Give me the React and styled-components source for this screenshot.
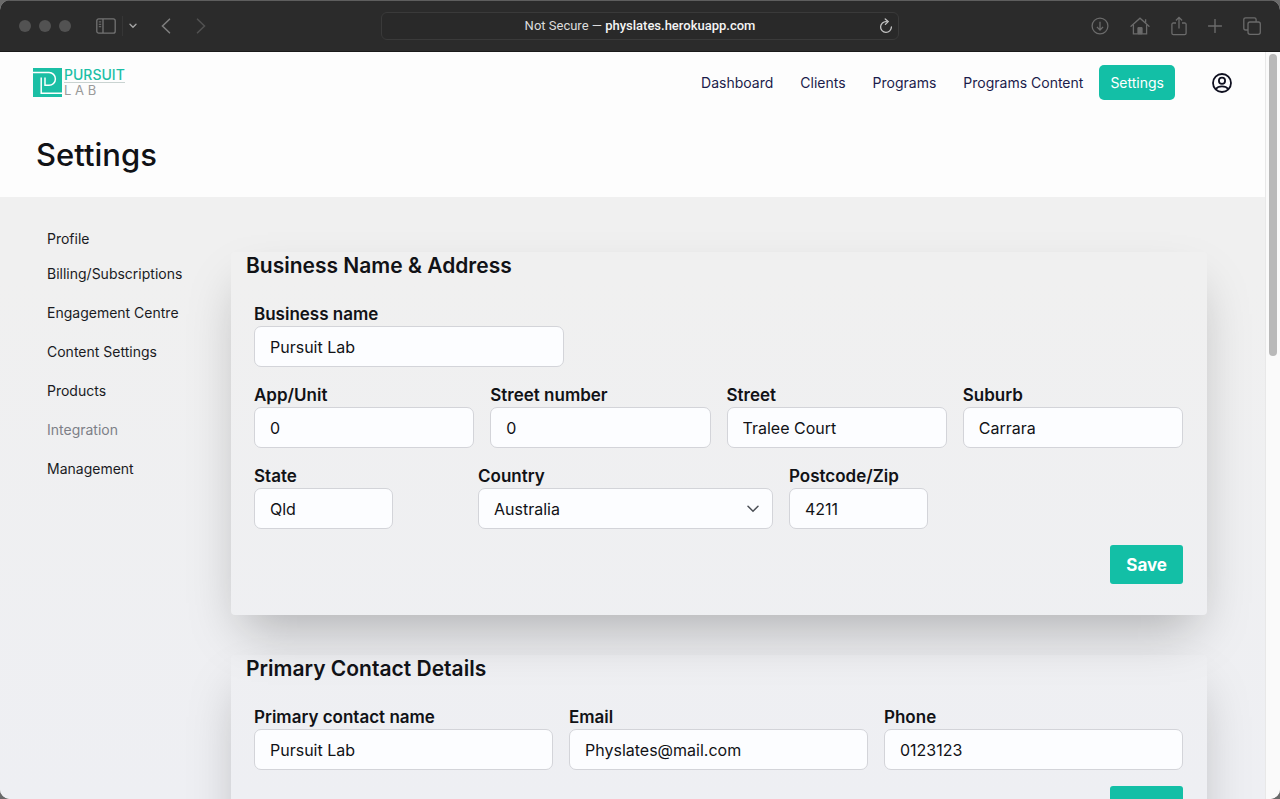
import React, { useState } from "react";
import styled, { createGlobalStyle } from "styled-components";

const NAV_LINKS = ["Dashboard", "Clients", "Programs", "Programs Content", "Settings"];

const SIDE_LINKS = [
  { label: "Profile" },
  { label: "Billing/Subscriptions" },
  { label: "Engagement Centre" },
  { label: "Content Settings" },
  { label: "Products" },
  { label: "Integration", muted: true },
  { label: "Management" },
];

function BrowserBar() {
  return (
    <Toolbar>
      <ToolGroup>
        <Lights>
          <Light />
          <Light />
          <Light />
        </Lights>
        <ToolButton aria-label="Sidebar" $color="#737373">
          <svg width="20" height="16" viewBox="0 0 20 16" fill="none" stroke="currentColor">
            <rect x="0.8" y="0.8" width="18.4" height="14.4" rx="2" strokeWidth="1.3" />
            <path d="M7 1v14" strokeWidth="1.3" />
            <path d="M2.8 3.9h2.4M2.8 6.3h2.4M2.8 8.7h2.4" />
          </svg>
        </ToolButton>
        <Divider />
        <ToolButton aria-label="Tab groups" $color="#a3a3a3">
          <svg width="8" height="6" viewBox="0 0 8 6" fill="none" stroke="currentColor">
            <path d="M1 1.2l3 3 3-3" strokeWidth="1.4" strokeLinecap="round" />
          </svg>
        </ToolButton>
        <History>
          <ToolButton aria-label="Back" $color="#7d7d7d">
            <svg width="10" height="16" viewBox="0 0 10 16" fill="none" stroke="currentColor">
              <path d="M8.5 1.2L1.5 8l7 6.8" strokeWidth="1.6" strokeLinecap="round" />
            </svg>
          </ToolButton>
          <ToolButton aria-label="Forward" $color="#505050">
            <svg width="10" height="16" viewBox="0 0 10 16" fill="none" stroke="currentColor">
              <path d="M1.5 1.2l7 6.8-7 6.8" strokeWidth="1.6" strokeLinecap="round" />
            </svg>
          </ToolButton>
        </History>
      </ToolGroup>
      <AddressBar>
        <span />
        <Address>
          Not Secure — <strong>physlates.herokuapp.com</strong>
        </Address>
        <ToolButton aria-label="Reload" $color="#c4c4c4">
          <svg width="14" height="16" viewBox="0 0 14 16" fill="none" stroke="currentColor">
            <path d="M7.4 3.6A5.4 5.4 0 1 0 12.4 9" strokeWidth="1.3" strokeLinecap="round" />
            <path d="M6.2 1l3 2.6-2.8 2.8" strokeWidth="1.3" strokeLinecap="round" />
          </svg>
        </ToolButton>
      </AddressBar>
      <ToolGroup $end>
        <ToolButton aria-label="Downloads" $color="#6b6b6b">
          <svg width="18" height="18" viewBox="0 0 18 18" fill="none" stroke="currentColor">
            <circle cx="9" cy="9" r="7.9" strokeWidth="1.3" />
            <path d="M9 4.8v8M5.9 9.9L9 13l3.1-3.1" strokeWidth="1.3" />
          </svg>
        </ToolButton>
        <ToolButton aria-label="Home" $color="#6b6b6b">
          <svg width="20" height="18" viewBox="0 0 20 18" fill="none" stroke="currentColor">
            <path d="M1 9.2L10 1.2l9 8" strokeWidth="1.3" strokeLinecap="round" />
            <path d="M3.4 7.6v9.2h13.2V7.6M15.6 5.8V2.2" strokeWidth="1.3" />
            <path d="M7.9 16.8v-6.2h4.2v6.2z" fill="currentColor" />
          </svg>
        </ToolButton>
        <ToolButton aria-label="Share" $color="#6b6b6b">
          <svg width="16" height="20" viewBox="0 0 16 20" fill="none" stroke="currentColor">
            <path
              d="M5 7H2.4C1.5 7 .9 7.6.9 8.4v8.8c0 .8.6 1.4 1.5 1.4h11.200c.9 0 1.5-.6 1.5-1.4V8.4c0-.8-.6-1.4-1.5-1.4H11"
              strokeWidth="1.3"
            />
            <path d="M8 12.6V1.6M4.9 4.5L8 1.4l3.1 3.1" strokeWidth="1.3" />
          </svg>
        </ToolButton>
        <ToolButton aria-label="New tab" $color="#6b6b6b">
          <svg width="14" height="14" viewBox="0 0 14 14" fill="none" stroke="currentColor">
            <path d="M7 .5v13M.5 7h13" strokeWidth="1.4" strokeLinecap="round" />
          </svg>
        </ToolButton>
        <ToolButton aria-label="Tabs" $color="#6b6b6b">
          <svg width="18" height="18" viewBox="0 0 18 18" fill="none" stroke="currentColor">
            <rect x="5" y="5" width="12.3" height="12.3" rx="2" strokeWidth="1.3" />
            <path
              d="M5 13H2.7C1.6 13 .8 12.3.8 11.2V2.6C.8 1.5 1.6.8 2.7.8h8.6c1.1 0 1.8.7 1.8 1.8V5"
              strokeWidth="1.3"
            />
          </svg>
        </ToolButton>
      </ToolGroup>
    </Toolbar>
  );
}

function Logo() {
  return (
    <LogoLink href="#" aria-label="Pursuit Lab">
      <svg width="29" height="29" viewBox="0 0 29 29" fill="none" stroke="#fff" strokeWidth="1.5">
        <rect width="29" height="29" fill="#1bbfa5" stroke="none" />
        <path d="M0 4.5h16a6.3 6.3 0 0 1 0 12.8h-4V9.5" />
        <path d="M8.2 9.5v15.8H29" />
      </svg>
      <LogoText>
        <LogoTop>PURSUIT</LogoTop>
        <LogoBottom>L A B</LogoBottom>
      </LogoText>
    </LogoLink>
  );
}

function TextField({ id, label, value, type = "text", width }) {
  const [text, setText] = useState(value);
  return (
    <Field>
      <Label htmlFor={id}>{label}</Label>
      <Input
        id={id}
        type={type}
        value={text}
        $width={width}
        onChange={(e) => setText(e.target.value)}
      />
    </Field>
  );
}

function CountryField() {
  return (
    <Field>
      <Label htmlFor="country">Country</Label>
      <SelectBox>
        <Select id="country" defaultValue="Australia">
          <option>Australia</option>
          <option>New Zealand</option>
        </Select>
        <svg width="12" height="8" viewBox="0 0 12 8" fill="none">
          <path d="M1 1.2l5 5 5-5" stroke="#4b4f56" strokeWidth="1.5" strokeLinecap="round" />
        </svg>
      </SelectBox>
    </Field>
  );
}

export default function App() {
  return (
    <>
      <GlobalStyle />
      <Window>
        <BrowserBar />
        <Viewport>
          <Page>
            <Header>
              <TopRow>
                <Logo />
                <Nav>
                  {NAV_LINKS.map((name) => (
                    <NavLink key={name} href="#" $active={name === "Settings"}>
                      {name}
                    </NavLink>
                  ))}
                  <Account aria-label="Account">
                    <svg width="20" height="20" viewBox="0 0 20 20" fill="none" stroke="#0f1020">
                      <circle cx="10" cy="10" r="9" strokeWidth="1.8" />
                      <circle cx="10" cy="7.8" r="3.1" strokeWidth="1.8" />
                      <path d="M3.8 16c1.4-1.9 3.7-2.7 6.2-2.7s4.8.8 6.2 2.7" strokeWidth="1.8" />
                    </svg>
                  </Account>
                </Nav>
              </TopRow>
              <Title>Settings</Title>
            </Header>
            <Body>
              <Sidebar>
                {SIDE_LINKS.map(({ label, muted }) => (
                  <SideLink key={label} href="#" $muted={muted}>
                    {label}
                  </SideLink>
                ))}
              </Sidebar>
              <Cards>
                <Card>
                  <CardTitle>Business Name &amp; Address</CardTitle>
                  <Form onSubmit={(e) => e.preventDefault()}>
                    <TextField id="business" label="Business name" value="Pursuit Lab" width="33.333%" />
                    <Row $columns="repeat(4, 1fr)">
                      <TextField id="unit" label="App/Unit" value="0" />
                      <TextField id="number" label="Street number" value="0" />
                      <TextField id="street" label="Street" value="Tralee Court" />
                      <TextField id="suburb" label="Suburb" value="Carrara" />
                    </Row>
                    <Row $columns="208fr 295fr 139fr 239fr">
                      <TextField id="state" label="State" value="Qld" width="66.666%" />
                      <CountryField />
                      <TextField id="postcode" label="Postcode/Zip" value="4211" />
                    </Row>
                    <SaveButton type="submit">Save</SaveButton>
                  </Form>
                </Card>
                <Card>
                  <CardTitle>Primary Contact Details</CardTitle>
                  <Form onSubmit={(e) => e.preventDefault()}>
                    <Row $columns="repeat(3, 1fr)">
                      <TextField id="contact" label="Primary contact name" value="Pursuit Lab" />
                      <TextField id="email" type="email" label="Email" value="Physlates@mail.com" />
                      <TextField id="phone" type="tel" label="Phone" value="0123123" />
                    </Row>
                    <SaveButton type="submit">Save</SaveButton>
                  </Form>
                </Card>
              </Cards>
            </Body>
          </Page>
          <ScrollTrack>
            <ScrollThumb />
          </ScrollTrack>
        </Viewport>
      </Window>
    </>
  );
}

const GlobalStyle = createGlobalStyle`
  * {
    box-sizing: border-box;
  }
  body {
    margin: 0;
    background: #6a6a6a;
    color: #111216;
    font-family: Inter, "Liberation Sans", sans-serif;
  }
  button,
  input,
  select {
    margin: 0;
    font-family: inherit;
    color: inherit;
  }
  a {
    color: inherit;
    text-decoration: none;
  }
`;

const Window = styled.div`
  display: flex;
  flex-direction: column;
  height: 100vh;
  overflow: hidden;
  border-radius: 10px;
  background: #f0f0f1;
`;

// browser toolbar
const Toolbar = styled.div`
  display: grid;
  grid-template-columns: 1fr minmax(0, 518px) 1fr;
  align-items: center;
  flex-shrink: 0;
  height: 52px;
  padding: 0 19px;
  background: #2b2b2b;
  border-top: 1px solid #5e5e5e;
  border-bottom: 1px solid #1a1a1a;
`;
const ToolGroup = styled.div`
  display: flex;
  align-items: center;
  justify-content: ${(props) => (props.$end ? "flex-end" : "flex-start")};
  gap: ${(props) => (props.$end ? "21px" : "6px")};
`;
const Lights = styled.div`
  display: flex;
  gap: 8px;
  margin-right: 19px;
`;
const Light = styled.span`
  width: 12px;
  height: 12px;
  border-radius: 50%;
  background: #525252;
`;
const ToolButton = styled.button`
  display: flex;
  padding: 0;
  border: none;
  background: none;
  color: ${(props) => props.$color};
`;
const Divider = styled.span`
  width: 1px;
  height: 20px;
  background: #363636;
`;
const History = styled.div`
  display: flex;
  gap: 25px;
  margin-left: 18px;
`;
const AddressBar = styled.div`
  display: grid;
  grid-template-columns: 14px 1fr 14px;
  align-items: center;
  height: 28px;
  padding: 0 5px;
  border: 1px solid #3a3a3a;
  border-radius: 6px;
  background: #292929;
`;
const Address = styled.div`
  color: #dcdcdc;
  font-family: Roboto, "Liberation Sans", sans-serif;
  font-size: 13px;
  line-height: 16px;
  text-align: center;

  strong {
    color: #f4f4f4;
    font-weight: 500;
  }
`;

const Viewport = styled.div`
  display: flex;
  flex: 1;
  min-height: 0;
`;
const Page = styled.div`
  flex: 1;
  min-width: 0;
  overflow: hidden;
  background: linear-gradient(#f0f0f0 30%, #eeeff3);
`;
const ScrollTrack = styled.div`
  flex-shrink: 0;
  width: 15px;
  padding: 2px 3px;
  border-left: 1px solid #e8e8e8;
  background: #fafafa;
`;
const ScrollThumb = styled.div`
  width: 8px;
  height: 302px;
  border-radius: 4px;
  background: #b9b9b9;
`;

// page header
const Header = styled.header`
  padding: 13px 33px 22px;
  background: #fdfdfd;
`;
const TopRow = styled.div`
  display: flex;
  align-items: center;
  justify-content: space-between;
`;
const LogoLink = styled.a`
  display: flex;
  align-items: center;
  gap: 2px;
`;
const LogoText = styled.span`
  display: flex;
  flex-direction: column;
  line-height: 14px;
`;
const LogoTop = styled.span`
  border-bottom: 1px solid #c9d3d1;
  color: #1bbfa5;
  font-size: 14px;
  font-weight: 500;
`;
const LogoBottom = styled.span`
  color: #9a9a9a;
  font-size: 13px;
`;
const Nav = styled.nav`
  display: flex;
  align-items: center;
  gap: 5px;
`;
const NavLink = styled.a`
  padding: 8px 11px 7px;
  border-radius: 5px;
  background: ${(props) => (props.$active ? "#13bfa6" : "transparent")};
  color: ${(props) => (props.$active ? "#fff" : "#1b1c4b")};
  font-size: 14px;
  line-height: 20px;
`;
const Account = styled.button`
  display: flex;
  margin-left: 32px;
  padding: 0;
  border: none;
  background: none;
`;
const Title = styled.h1`
  margin: 35px 0 0 3px;
  font-size: 31px;
  font-weight: 500;
  line-height: 40px;
`;

// settings body
const Body = styled.main`
  display: grid;
  grid-template-columns: 231px minmax(0, 1fr);
  padding-right: 58px;
`;
const Sidebar = styled.nav`
  display: flex;
  flex-direction: column;
  align-items: flex-start;
  gap: 19px;
  padding: 32px 0 0 47px;
`;
const SideLink = styled.a`
  color: ${(props) => (props.$muted ? "#7d7f87" : "#1a1b1f")};
  font-size: 14px;
  line-height: 20px;

  &:first-child {
    margin-bottom: -4px;
  }
`;
const Cards = styled.div`
  display: flex;
  flex-direction: column;
  gap: 40px;
  padding: 55px 0;
`;
const Card = styled.section`
  padding: 0 24px 31px 15px;
  border-radius: 4px;
  box-shadow: 0 25px 50px -12px rgba(0, 0, 0, 0.27);
`;
const CardTitle = styled.h2`
  margin: 0 0 22px;
  font-size: 21px;
  font-weight: 600;
  line-height: 28px;
`;
const Form = styled.form`
  display: flex;
  flex-direction: column;
  gap: 16px;
  padding-left: 8px;
`;
const Row = styled.div`
  display: grid;
  grid-template-columns: ${(props) => props.$columns};
  gap: 16px;
`;
const Field = styled.div`
  display: flex;
  flex-direction: column;
  min-width: 0;
`;
const Label = styled.label`
  font-size: 17px;
  font-weight: 600;
  line-height: 24px;
`;
const Input = styled.input`
  width: ${(props) => props.$width || "100%"};
  height: 41px;
  padding: 0 15px;
  border: 1px solid #d3d4d9;
  border-radius: 7px;
  background: #fcfdff;
  font-size: 16px;
`;
const SelectBox = styled.div`
  position: relative;

  svg {
    position: absolute;
    top: 17px;
    right: 14px;
    pointer-events: none;
  }
`;
const Select = styled.select`
  display: block;
  width: 100%;
  height: 41px;
  padding: 0 36px 0 15px;
  border: 1px solid #d3d4d9;
  border-radius: 7px;
  background: #fcfdff;
  font-size: 16px;
  appearance: none;
`;
const SaveButton = styled.button`
  align-self: flex-end;
  height: 39px;
  padding: 0 16px;
  border: none;
  border-radius: 3px;
  background: #13bfa6;
  color: #fff;
  font-size: 17px;
  font-weight: 700;
`;
